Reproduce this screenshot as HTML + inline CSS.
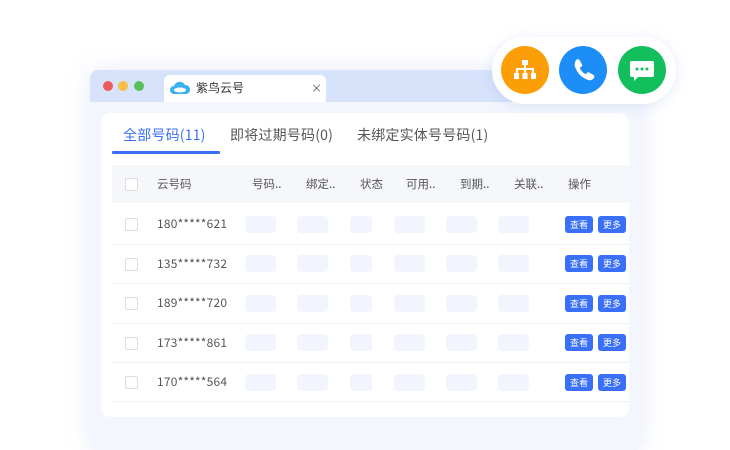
<!DOCTYPE html>
<html><head><meta charset="utf-8"><style>
*{margin:0;padding:0;box-sizing:border-box}
body{width:730px;height:430px;background:#fff;position:relative;overflow:hidden;font-family:"Noto Sans CJK SC","Liberation Sans",sans-serif}
.win{position:absolute;left:90px;top:70px;width:552px;height:380px;background:#f3f6fc;border-radius:8px;box-shadow:0 0 24px rgba(120,150,220,.18)}
.bar{position:absolute;left:0;top:0;width:100%;height:32px;background:#d7e3fb;border-radius:8px 8px 0 0}
.dot{position:absolute;top:11px;width:10px;height:10px;border-radius:50%}
.tab{position:absolute;left:74px;top:5px;width:162px;height:27px;background:#fff;border-radius:6px 6px 0 0;font-size:12px;color:#333}
.card{position:absolute;left:101px;top:113px;width:528px;height:304px;background:#fff;border-radius:10px}
.t{position:absolute;font-size:14px;color:#555;top:125px;letter-spacing:0.2px}
.hd{position:absolute;left:112px;top:165px;width:517px;height:38px;background:#f5f7fb}
.th{position:absolute;font-size:11.5px;color:#555;top:176px}
.cb{position:absolute;width:13px;height:13px;border:1px solid #ddd;border-radius:2px;background:#fff}
.row{position:absolute;left:112px;width:517px;height:1px;background:#f0f2f6}
.ph{position:absolute;height:17px;background:#f2f5fd;border-radius:4px}
.num{position:absolute;left:157px;font-size:12px;color:#555;letter-spacing:0.2px}
.btn{position:absolute;height:17px;background:#3a6ff8;color:#fff;font-size:9px;border-radius:3px;text-align:center;line-height:17px}
.pill{position:absolute;left:492px;top:37px;width:184px;height:67px;background:#fff;border-radius:34px;box-shadow:0 2px 14px rgba(120,150,220,.2)}
.c{position:absolute;top:46px;width:48px;height:48px;border-radius:50%}
</style></head><body>
<div class="win">
<div class="bar"></div>
<div class="dot" style="left:13px;background:#ee5a5a"></div>
<div class="dot" style="left:28px;background:#f8bd45"></div>
<div class="dot" style="left:44px;background:#5ac05a"></div>
<div class="tab">
<svg style="position:absolute;left:6px;top:6px" width="20" height="15" viewBox="0 0 20 15"><path d="M4 13a4 4 0 0 1 0-8 6 6 0 0 1 11-1 4.5 4.5 0 0 1 1 9z" fill="#3ab0f0"/><ellipse cx="10" cy="9" rx="6" ry="2.5" fill="#fff"/></svg>
<span style="position:absolute;left:32px;top:4px">紫鸟云号</span>
<span style="position:absolute;left:147px;top:5px;font-size:11px;color:#555">×</span>
</div>
</div>
<div class="card"></div>
<div class="t" style="left:123px;color:#3a6ff8">全部号码(11)</div>
<div class="t" style="left:230px">即将过期号码(0)</div>
<div class="t" style="left:357px">未绑定实体号号码(1)</div>
<div style="position:absolute;left:112px;top:151px;width:108px;height:3px;background:#3a6ff8;border-radius:1px"></div>
<div class="hd"></div>
<div class="cb" style="left:125px;top:178px"></div>
<div class="th" style="left:157px">云号码</div>
<div class="th" style="left:252px">号码..</div>
<div class="th" style="left:306px">绑定..</div>
<div class="th" style="left:360px">状态</div>
<div class="th" style="left:406px">可用..</div>
<div class="th" style="left:460px">到期..</div>
<div class="th" style="left:514px">关联..</div>
<div class="th" style="left:568px">操作</div>

<div class="cb" style="left:125px;top:218px"></div><div class="num" style="top:215px">180*****621</div>
<div class="cb" style="left:125px;top:258px"></div><div class="num" style="top:255px">135*****732</div>
<div class="cb" style="left:125px;top:297px"></div><div class="num" style="top:294px">189*****720</div>
<div class="cb" style="left:125px;top:337px"></div><div class="num" style="top:334px">173*****861</div>
<div class="cb" style="left:125px;top:376px"></div><div class="num" style="top:373px">170*****564</div>
<div class="row" style="top:244px"></div><div class="row" style="top:283px"></div><div class="row" style="top:323px"></div><div class="row" style="top:362px"></div><div class="row" style="top:401px"></div>

<div style="position:absolute;left:0;top:0">
<div class="ph" style="left:245px;top:216px;width:31px"></div><div class="ph" style="left:297px;top:216px;width:31px"></div><div class="ph" style="left:350px;top:216px;width:22px"></div><div class="ph" style="left:394px;top:216px;width:31px"></div><div class="ph" style="left:446px;top:216px;width:31px"></div><div class="ph" style="left:498px;top:216px;width:31px"></div>
<div class="btn" style="left:565px;top:216px;width:28px">查看</div><div class="btn" style="left:598px;top:216px;width:28px">更多</div>

<div class="ph" style="left:245px;top:255px;width:31px"></div><div class="ph" style="left:297px;top:255px;width:31px"></div><div class="ph" style="left:350px;top:255px;width:22px"></div><div class="ph" style="left:394px;top:255px;width:31px"></div><div class="ph" style="left:446px;top:255px;width:31px"></div><div class="ph" style="left:498px;top:255px;width:31px"></div>
<div class="btn" style="left:565px;top:255px;width:28px">查看</div><div class="btn" style="left:598px;top:255px;width:28px">更多</div>

<div class="ph" style="left:245px;top:295px;width:31px"></div><div class="ph" style="left:297px;top:295px;width:31px"></div><div class="ph" style="left:350px;top:295px;width:22px"></div><div class="ph" style="left:394px;top:295px;width:31px"></div><div class="ph" style="left:446px;top:295px;width:31px"></div><div class="ph" style="left:498px;top:295px;width:31px"></div>
<div class="btn" style="left:565px;top:295px;width:28px">查看</div><div class="btn" style="left:598px;top:295px;width:28px">更多</div>

<div class="ph" style="left:245px;top:334px;width:31px"></div><div class="ph" style="left:297px;top:334px;width:31px"></div><div class="ph" style="left:350px;top:334px;width:22px"></div><div class="ph" style="left:394px;top:334px;width:31px"></div><div class="ph" style="left:446px;top:334px;width:31px"></div><div class="ph" style="left:498px;top:334px;width:31px"></div>
<div class="btn" style="left:565px;top:334px;width:28px">查看</div><div class="btn" style="left:598px;top:334px;width:28px">更多</div>

<div class="ph" style="left:245px;top:374px;width:31px"></div><div class="ph" style="left:297px;top:374px;width:31px"></div><div class="ph" style="left:350px;top:374px;width:22px"></div><div class="ph" style="left:394px;top:374px;width:31px"></div><div class="ph" style="left:446px;top:374px;width:31px"></div><div class="ph" style="left:498px;top:374px;width:31px"></div>
<div class="btn" style="left:565px;top:374px;width:28px">查看</div><div class="btn" style="left:598px;top:374px;width:28px">更多</div>
</div>

<div class="pill"></div>
<div class="c" style="left:501px;background:#fb9e08">
<svg width="48" height="48" viewBox="0 0 48 48"><g fill="#fff"><rect x="21" y="14" width="6" height="5"/><rect x="23" y="19" width="2" height="4"/><rect x="15" y="22" width="18" height="2"/><rect x="15" y="22" width="2" height="5"/><rect x="23" y="22" width="2" height="5"/><rect x="31" y="22" width="2" height="5"/><rect x="13" y="27" width="5" height="6"/><rect x="21.5" y="27" width="5" height="6"/><rect x="30" y="27" width="5" height="6"/></g></svg>
</div>
<div class="c" style="left:559px;background:#1d8df8">
<svg width="48" height="48" viewBox="0 0 48 48"><path d="M17 14c1.5-1 3-1 3.5 0l2.5 4.5c.5 1 0 2-1 2.5l-1.2.8c1 2.8 3.2 5.2 6 6.5l.9-1.2c.7-.9 1.7-1.1 2.6-.6l4.3 2.6c1 .6 1 2 0 3.3-1.5 1.8-3.4 2.3-5.5 1.6-6.5-2.2-11.5-7.4-13.3-14-.5-2.2.4-4.5 1.2-6z" fill="#fff"/></svg>
</div>
<div class="c" style="left:618px;background:#12bf5c">
<svg width="48" height="48" viewBox="0 0 48 48"><path d="M14 15h20a2 2 0 0 1 2 2v12a2 2 0 0 1-2 2H20l-4 4v-4h-2a2 2 0 0 1-2-2V17a2 2 0 0 1 2-2z" fill="#fff"/><g fill="#12bf5c"><circle cx="19" cy="23" r="1.5"/><circle cx="24" cy="23" r="1.5"/><circle cx="29" cy="23" r="1.5"/></g></svg>
</div>
</body></html>
